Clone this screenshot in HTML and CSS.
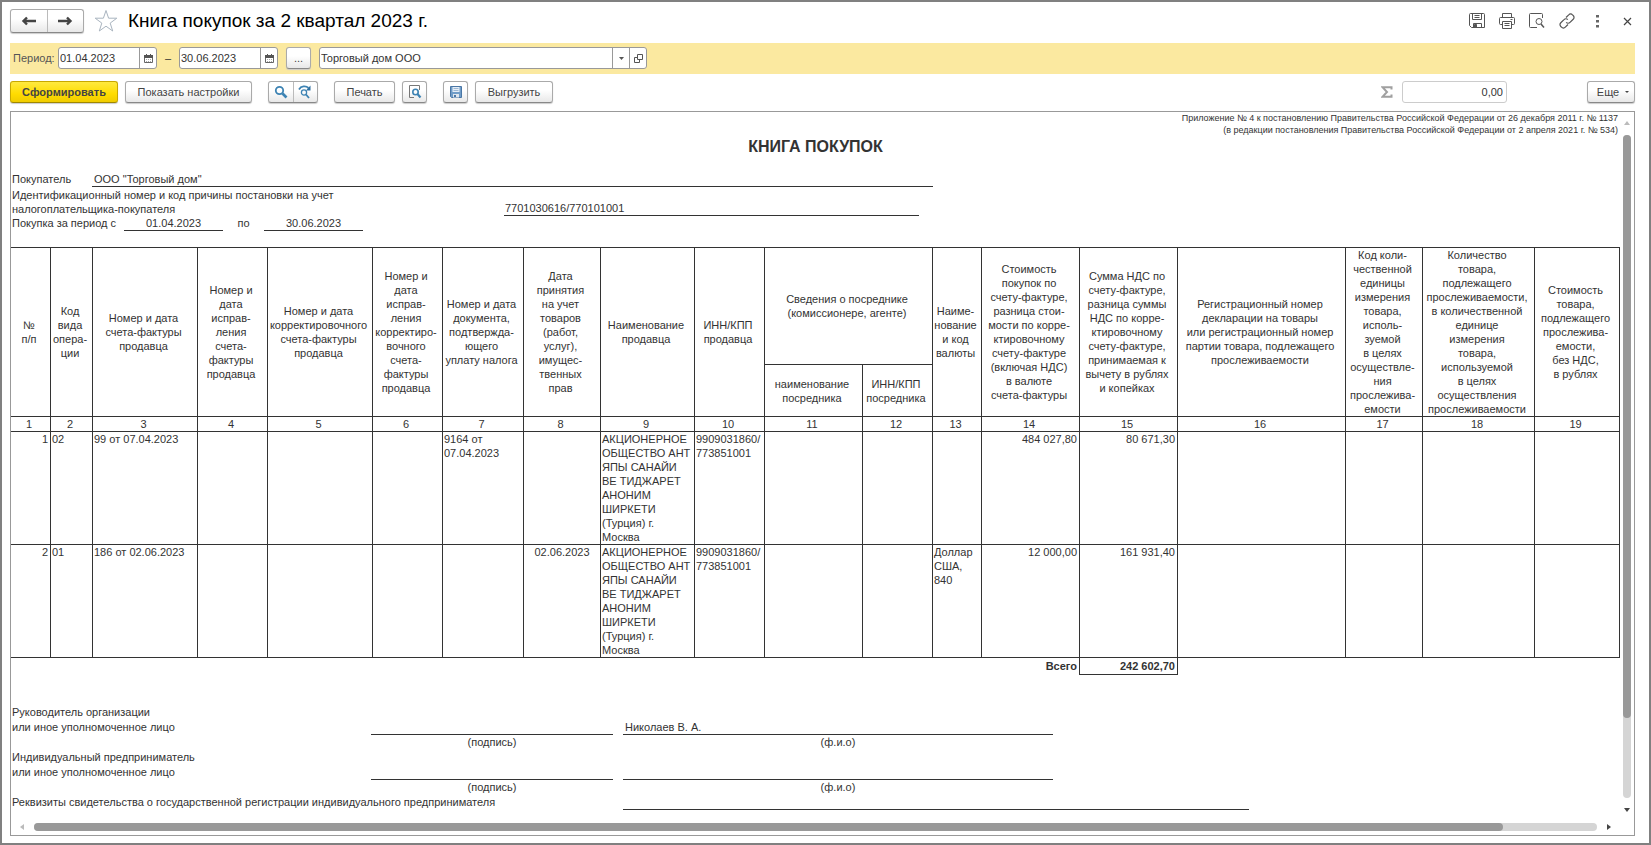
FILE: index.html
```html
<!DOCTYPE html>
<html lang="ru">
<head>
<meta charset="utf-8">
<title>Книга покупок за 2 квартал 2023 г.</title>
<link rel="stylesheet" href="styles.css">
</head>
<body>
<div class="window">
  <header class="titlebar">
    <div class="group nav">
      <button type="button" aria-label="Назад"><svg width="16" height="12" viewBox="0 0 16 12"><path d="M6 2.500L2.500 6 6 9.500M2 6h13" fill="none" stroke="#444" stroke-width="2.400"/></svg></button>
      <button type="button" aria-label="Вперед"><svg width="16" height="12" viewBox="0 0 16 12"><path d="M10 2.500L13.500 6 10 9.500M14 6H1" fill="none" stroke="#444" stroke-width="2.400"/></svg></button>
    </div>
    <button type="button" class="plain star" aria-label="В избранное"><svg width="24" height="24" viewBox="0 0 24 24"><path d="M12 1.500l2.600 7.700h8.200l-6.600 4.900 2.500 7.900-6.700-4.800-6.700 4.800 2.500-7.900-6.600-4.900h8.200z" fill="#fff" stroke="#a9b4bf"/></svg></button>
    <h1>Книга покупок за 2 квартал 2023 г.</h1>
    <div class="actions">
      <button type="button" class="plain" aria-label="Сохранить"><svg width="16" height="16" viewBox="0 0 16 16" fill="none" stroke="#555"><path d="M.5 1.500a1 1 0 0 1 1-1h13a1 1 0 0 1 1 1v13h-13l-2-2z"/><path d="M3.500.5v6h9v-6M5.500 2.500h5M5.500 4.500h5M4.500 14.500v-4h8v4"/><path d="M5.500 11.500h2v3h-2z" fill="#555"/></svg></button>
      <button type="button" class="plain" aria-label="Печать"><svg width="16" height="16" viewBox="0 0 16 16" fill="none" stroke="#555"><path d="M3.500 4.500v-4h9v4M3.500 11.500h-2a1 1 0 0 1-1-1v-5a1 1 0 0 1 1-1h13a1 1 0 0 1 1 1v5a1 1 0 0 1-1 1h-2"/><path d="M3.500 8.500h9v7h-9zM5.500 10.500h5M5.500 12.500h5M11.500 6.500h2"/></svg></button>
      <button type="button" class="plain" aria-label="Предварительный просмотр"><svg width="16" height="16" viewBox="0 0 16 16" fill="none" stroke="#555"><path d="M13.500 5V1.500a1 1 0 0 0-1-1h-11a1 1 0 0 0-1 1v12a1 1 0 0 0 1 1H8"/><circle cx="10" cy="8.500" r="3"/><path d="M12 11l3 3.500" stroke-width="1.500"/></svg></button>
      <button type="button" class="plain" aria-label="Получить ссылку"><svg width="16" height="16" viewBox="0 0 16 16" fill="none" stroke="#555" stroke-width="1.200"><path d="M7 4.500l2.700-2.700a2.600 2.600 0 0 1 3.800 0l.7.700a2.600 2.600 0 0 1 0 3.800L11 9.400a2.600 2.600 0 0 1-3.800 0M9 11.500l-2.700 2.700a2.600 2.600 0 0 1-3.800 0l-.7-.7a2.600 2.600 0 0 1 0-3.800L5 6.600a2.600 2.600 0 0 1 3.800 0"/></svg></button>
      <button type="button" class="plain" aria-label="Дополнительно"><svg width="16" height="16" viewBox="0 0 16 16" fill="#666"><path d="M7 2h3v2.500H7zM7 7h3v2.500H7zM7 12h3v2.500H7z"/></svg></button>
      <button type="button" class="plain" aria-label="Закрыть"><svg width="16" height="16" viewBox="0 0 16 16"><path d="M5 5l7 7M12 5l-7 7" stroke="#444" stroke-width="1.200"/></svg></button>
    </div>
  </header>

  <form class="period">
    <label for="from">Период:</label>
    <div class="field date">
      <input id="from" type="text" value="01.04.2023">
      <button type="button" aria-label="Выбрать начало"><svg width="9" height="9" viewBox="0 0 9 9"><path d="M.5 1.500h8v7h-8z" fill="#fff" stroke="#666"/><path d="M0 1h9v3H0zM2 0h1v2H2zM6 0h1v2H6z" fill="#555"/><path d="M2 5.500h5M2 7.500h5" stroke="#aaa" stroke-dasharray="1 1"/></svg></button>
    </div>
    <span class="dash">–</span>
    <div class="field date">
      <input type="text" value="30.06.2023" aria-label="Конец периода">
      <button type="button" aria-label="Выбрать конец"><svg width="9" height="9" viewBox="0 0 9 9"><path d="M.5 1.500h8v7h-8z" fill="#fff" stroke="#666"/><path d="M0 1h9v3H0zM2 0h1v2H2zM6 0h1v2H6z" fill="#555"/><path d="M2 5.500h5M2 7.500h5" stroke="#aaa" stroke-dasharray="1 1"/></svg></button>
    </div>
    <button type="button" class="btn square more">...</button>
    <div class="field company">
      <select aria-label="Организация"><option>Торговый дом ООО</option></select>
      <span class="arrow"><svg width="5" height="3" viewBox="0 0 5 3"><path d="M0 0h5L2.500 3z" fill="#555"/></svg></span>
      <button type="button" aria-label="Открыть"><svg width="9" height="9" viewBox="0 0 9 9" fill="none" stroke="#555"><path d="M3.500.5h5v5h-5zM3.500 3.500h-3v5h5v-3"/></svg></button>
    </div>
  </form>

  <div class="toolbar">
    <button type="button" class="btn primary">Сформировать</button>
    <button type="button" class="btn settings">Показать настройки</button>
    <div class="group find">
      <button type="button" aria-label="Найти"><svg width="14" height="14" viewBox="0 0 14 14" fill="none" stroke="#3d83b3"><circle cx="5.500" cy="5.500" r="3.700" stroke-width="1.800"/><path d="M8.500 8.500l4 4" stroke-width="2.600"/></svg></button>
      <button type="button" aria-label="Найти далее"><svg width="14" height="14" viewBox="0 0 14 14" fill="none" stroke="#3d83b3"><path d="M1 4.500C3 .8 8 .5 10.500 3" stroke-width="1.800"/><path d="M12.500.5v5H8z" fill="#2f6f9f" stroke="none"/><circle cx="6" cy="7.500" r="2.600" stroke-width="1.300"/><path d="M8 9.500l3 3.500" stroke-width="1.800"/></svg></button>
    </div>
    <button type="button" class="btn print">Печать</button>
    <button type="button" class="btn square" aria-label="Просмотр"><svg width="14" height="14" viewBox="0 0 14 14" fill="none"><path d="M11.500 5V.5h-10v12H6" stroke="#777"/><circle cx="7.500" cy="7" r="2.700" stroke="#3d83b3" stroke-width="1.600"/><path d="M9.500 9l3 3.500" stroke="#3d83b3" stroke-width="2.200"/></svg></button>
    <button type="button" class="btn square save" aria-label="Сохранить отчет"><svg width="12" height="12" viewBox="0 0 12 12"><path d="M.5.5h11v11h-10l-1-1z" fill="#6f9cc8" stroke="#4a76a5"/><path d="M2.500 1h7v5h-7z" fill="#e6eef7"/><path d="M3.500 2.500h5M3.500 4.500h5" stroke="#9db8d4"/><path d="M3 8h6v3.500H3z" fill="#dfe6ee"/><path d="M4 9h2v2H4z" fill="#4a76a5"/></svg></button>
    <button type="button" class="btn export">Выгрузить</button>
    <svg class="sigma" width="12" height="12" viewBox="0 0 12 12"><path d="M10.500 3.500V1.200h-9L6 6l-4.500 4.800h9V8.500" fill="none" stroke="#a0a0a0" stroke-width="2"/></svg>
    <input class="sum" type="text" value="0,00" aria-label="Сумма">
    <button type="button" class="btn menu">Еще <svg width="4" height="2" viewBox="0 0 4 2"><path d="M0 0h4L2 2z" fill="#444"/></svg></button>
  </div>

  <main class="report">
    <div class="sheet">
      <p class="annex">Приложение № 4 к постановлению Правительства Российской Федерации от 26 декабря 2011 г. № 1137<br>(в редакции постановления Правительства Российской Федерации от 2 апреля 2021 г. № 534)</p>
      <h2>КНИГА ПОКУПОК</h2>

      <div class="line"><span class="buyer-label">Покупатель</span><span class="value buyer">ООО "Торговый дом"</span></div>
      <div class="taxpayer">
        <span>Идентификационный номер и код причины постановки на учет<br>налогоплательщика-покупателя</span>
        <span class="value inn">7701030616/770101001</span>
      </div>
      <div class="line"><span class="range-label">Покупка за период с</span><span class="value day">01.04.2023</span><span class="to">по</span><span class="value day">30.06.2023</span></div>

      <table class="ledger">
        <colgroup><col class="w40"><col class="w42"><col class="w105"><col class="w70"><col class="w105"><col class="w70"><col class="w81"><col class="w77"><col class="w94"><col class="w70"><col class="w98"><col class="w70"><col class="w49"><col class="w98"><col class="w98"><col class="w168"><col class="w77"><col class="w112"><col class="w85"></colgroup>
        <thead>
          <tr class="upper">
            <th rowspan="2">№<br>п/п</th>
            <th rowspan="2">Код<br>вида<br>опера-<br>ции</th>
            <th rowspan="2">Номер и дата<br>счета-фактуры<br>продавца</th>
            <th rowspan="2">Номер и<br>дата<br>исправ-<br>ления<br>счета-<br>фактуры<br>продавца</th>
            <th rowspan="2">Номер и дата<br>корректировочного<br>счета-фактуры<br>продавца</th>
            <th rowspan="2">Номер и<br>дата<br>исправ-<br>ления<br>корректиро-<br>вочного<br>счета-<br>фактуры<br>продавца</th>
            <th rowspan="2">Номер и дата<br>документа,<br>подтвержда-<br>ющего<br>уплату налога</th>
            <th rowspan="2">Дата<br>принятия<br>на учет<br>товаров<br>(работ,<br>услуг),<br>имущес-<br>твенных<br>прав</th>
            <th rowspan="2">Наименование<br>продавца</th>
            <th rowspan="2">ИНН/КПП<br>продавца</th>
            <th colspan="2">Сведения о посреднике<br>(комиссионере, агенте)</th>
            <th rowspan="2">Наиме-<br>нование<br>и код<br>валюты</th>
            <th rowspan="2">Стоимость<br>покупок по<br>счету-фактуре,<br>разница стои-<br>мости по корре-<br>ктировочному<br>счету-фактуре<br>(включая НДС)<br>в валюте<br>счета-фактуры</th>
            <th rowspan="2">Сумма НДС по<br>счету-фактуре,<br>разница суммы<br>НДС по корре-<br>ктировочному<br>счету-фактуре,<br>принимаемая к<br>вычету в рублях<br>и копейках</th>
            <th rowspan="2">Регистрационный номер<br>декларации на товары<br>или регистрационный номер<br>партии товара, подлежащего<br>прослеживаемости</th>
            <th rowspan="2">Код коли-<br>чественной<br>единицы<br>измерения<br>товара,<br>исполь-<br>зуемой<br>в целях<br>осуществле-<br>ния<br>прослежива-<br>емости</th>
            <th rowspan="2">Количество<br>товара,<br>подлежащего<br>прослеживаемости,<br>в количественной<br>единице<br>измерения<br>товара,<br>используемой<br>в целях<br>осуществления<br>прослеживаемости</th>
            <th rowspan="2">Стоимость<br>товара,<br>подлежащего<br>прослежива-<br>емости,<br>без НДС,<br>в рублях</th>
          </tr>
          <tr class="lower"><th>наименование<br>посредника</th><th>ИНН/КПП<br>посредника</th></tr>
          <tr class="numbers"><th>1</th><th>2</th><th>3</th><th>4</th><th>5</th><th>6</th><th>7</th><th>8</th><th>9</th><th>10</th><th>11</th><th>12</th><th>13</th><th>14</th><th>15</th><th>16</th><th>17</th><th>18</th><th>19</th></tr>
        </thead>
        <tbody>
          <tr><td class="num">1</td><td>02</td><td>99 от 07.04.2023</td><td></td><td></td><td></td><td>9164 от<br>07.04.2023</td><td></td><td>АКЦИОНЕРНОЕ<br>ОБЩЕСТВО АНТ<br>ЯПЫ САНАЙИ<br>ВЕ ТИДЖАРЕТ<br>АНОНИМ<br>ШИРКЕТИ<br>(Турция) г.<br>Москва</td><td>9909031860/<br>773851001</td><td></td><td></td><td></td><td class="num">484 027,80</td><td class="num">80 671,30</td><td></td><td></td><td></td><td></td></tr>
          <tr><td class="num">2</td><td>01</td><td>186 от 02.06.2023</td><td></td><td></td><td></td><td></td><td class="mid">02.06.2023</td><td>АКЦИОНЕРНОЕ<br>ОБЩЕСТВО АНТ<br>ЯПЫ САНАЙИ<br>ВЕ ТИДЖАРЕТ<br>АНОНИМ<br>ШИРКЕТИ<br>(Турция) г.<br>Москва</td><td>9909031860/<br>773851001</td><td></td><td></td><td>Доллар<br>США,<br>840</td><td class="num">12 000,00</td><td class="num">161 931,40</td><td></td><td></td><td></td><td></td></tr>
        </tbody>
        <tfoot>
          <tr><td colspan="14" class="num caption">Всего</td><td class="num total">242 602,70</td><td colspan="4" class="caption"></td></tr>
        </tfoot>
      </table>

      <div class="signatures">
        <span class="wide">Руководитель организации</span>
        <span>или иное уполномоченное лицо</span><span class="value"></span><span class="value name">Николаев В. А.</span>
        <span class="hint sign">(подпись)</span><span class="hint person">(ф.и.о)</span>
        <span class="wide">Индивидуальный предприниматель</span>
        <span>или иное уполномоченное лицо</span><span class="value"></span><span class="value name"></span>
        <span class="hint sign">(подпись)</span><span class="hint person">(ф.и.о)</span>
        <span class="requisites">Реквизиты свидетельства о государственной регистрации индивидуального предпринимателя</span><span class="value certificate"></span>
      </div>
    </div>
    <div class="vbar">
      <svg width="6" height="4" viewBox="0 0 6 4"><path d="M0 4h6L3 0z" fill="#bbb"/></svg>
      <div class="track"><div class="thumb"></div></div>
      <svg width="6" height="4" viewBox="0 0 6 4"><path d="M0 0h6L3 4z" fill="#444"/></svg>
    </div>
    <div class="hbar">
      <svg width="4" height="6" viewBox="0 0 4 6"><path d="M4 0v6L0 3z" fill="#bbb"/></svg>
      <div class="track"><div class="thumb"></div></div>
      <svg width="4" height="6" viewBox="0 0 4 6"><path d="M0 0v6l4-3z" fill="#444"/></svg>
    </div>
  </main>
</div>
</body>
</html>
```
FILE: styles.css
```css
* { box-sizing: border-box; }

body {
  margin: 0;
  font-family: "Liberation Sans", Arial, sans-serif;
  font-size: 11px;
  line-height: 14px;
  color: #333;
}

button, input, select {
  font: inherit;
  color: inherit;
  margin: 0;
}

svg { display: block; flex: none; }

.window {
  display: flex;
  flex-direction: column;
  height: 100vh;
  min-height: 400px;
  padding: 7px 14px 7px 8px;
  border: 2px solid #808080;
  background: #fff;
}

/* Title bar */
.titlebar {
  display: flex;
  align-items: center;
  height: 24px;
  flex: none;
}

.titlebar h1 {
  margin: 0 0 0 10px;
  font-size: 19px;
  line-height: 24px;
  font-weight: normal;
  color: #000;
}

.group {
  display: flex;
  border: 1px solid #aaa;
  border-bottom-color: #888;
  border-radius: 3px;
  background: linear-gradient(#fff 40%, #e8e8e8);
  box-shadow: 0 1px 1px #ccc;
}

.group button {
  display: flex;
  flex: 1;
  align-items: center;
  justify-content: center;
  padding: 0;
  border: 0;
  background: none;
}

.group button + button { border-left: 1px solid #bbb; }

.nav { width: 74px; height: 24px; }

.plain {
  padding: 0;
  border: 0;
  background: none;
}

.star { margin-left: 10px; }

.actions {
  display: flex;
  gap: 14px;
  margin-left: auto;
}

/* Period band */
.period {
  display: flex;
  align-items: flex-start;
  flex: none;
  height: 31px;
  margin-top: 10px;
  padding: 4px 0 0 3px;
  background: #fbe9a0;
}

.period label, .dash { line-height: 22px; }
.period label { width: 45px; color: #555; }

.field {
  display: flex;
  position: relative;
  height: 22px;
  border: 1px solid #999;
  border-radius: 3px;
  background: #fff;
}

.field input, .field select {
  flex: 1;
  min-width: 0;
  padding: 0 1px;
  border: 0;
  background: none;
  appearance: none;
}

.field button {
  display: flex;
  align-items: center;
  justify-content: center;
  width: 17px;
  padding: 0;
  border: 0;
  border-left: 1px solid #999;
  background: none;
}

.date { width: 99px; }
.dash { width: 22px; text-align: center; }
.company { width: 328px; }
.company select { padding: 0 20px 0 1px; }

.arrow {
  position: absolute;
  top: 0;
  right: 16px;
  display: flex;
  align-items: center;
  justify-content: center;
  width: 18px;
  height: 100%;
  border-left: 1px solid #999;
  pointer-events: none;
}

.btn {
  display: flex;
  align-items: center;
  justify-content: center;
  height: 22px;
  padding: 0;
  border: 1px solid #aaa;
  border-bottom-color: #888;
  border-radius: 3px;
  background: linear-gradient(#fff 40%, #e8e8e8);
  box-shadow: 0 1px 1px #ccc;
  color: #444;
}

.square { width: 25px; }
.more { margin: 0 8px; }

/* Command bar */
.toolbar {
  display: flex;
  align-items: center;
  flex: none;
  height: 22px;
  margin-top: 7px;
}

.primary {
  width: 108px;
  border-color: #c8a800;
  border-bottom-color: #a08800;
  background: linear-gradient(#ffe940, #ffdc00 60%, #f0cc00);
  font-weight: bold;
}

.settings { width: 127px; margin-left: 7px; }
.find { width: 50px; height: 22px; margin-left: 16px; }
.print { width: 61px; margin: 0 7px 0 16px; }
.save { margin: 0 7px 0 16px; }
.export { width: 78px; }
.sigma { margin-left: auto; }

.sum {
  width: 105px;
  height: 22px;
  margin: 0 80px 0 9px;
  padding: 0 3px;
  border: 1px solid #ccc;
  border-radius: 3px;
  text-align: right;
}

.menu { width: 48px; gap: 6px; padding-left: 4px; }

/* Report area with its scroll bars */
.report {
  display: grid;
  grid-template-columns: minmax(0, 1fr) 14px;
  grid-template-rows: minmax(0, 1fr) 16px;
  flex: 1;
  min-height: 0;
  margin-top: 8px;
  border: 1px solid #999;
}

.sheet { overflow: hidden; white-space: nowrap; }

.annex {
  margin: 0;
  padding-right: 2px;
  font-size: 9px;
  line-height: 12px;
  text-align: right;
}

.sheet h2 {
  margin: 1px 0 15px;
  font-size: 16px;
  line-height: 20px;
  text-align: center;
}

.line { display: flex; height: 15px; padding-left: 1px; }

.value { border-bottom: 1px solid #333; height: 15px; }

.buyer-label { width: 80px; }
.buyer { width: 841px; padding-left: 2px; }

.taxpayer {
  display: flex;
  align-items: flex-end;
  height: 29px;
  padding-left: 1px;
}

.taxpayer span:first-child { width: 492px; }
.taxpayer .inn { width: 415px; padding-left: 1px; }

.range-label { width: 112px; }
.day { width: 99px; text-align: center; }
.to { width: 41px; text-align: center; }

.ledger {
  width: calc(100% - 1px);
  margin-top: 16px;
  table-layout: fixed;
  border-collapse: separate;
  border-spacing: 0;
}

.w40 { width: 40px; }
.w42 { width: 42px; }
.w49 { width: 49px; }
.w70 { width: 70px; }
.w77 { width: 77px; }
.w81 { width: 81px; }
.w85 { width: 85px; }
.w94 { width: 94px; }
.w98 { width: 98px; }
.w105 { width: 105px; }
.w112 { width: 112px; }
.w168 { width: 168px; }

.ledger th, .ledger td {
  padding: 0 1px;
  border: solid #333;
  border-width: 0 1px 1px 0;
  font-weight: normal;
}

.ledger th { padding: 0 3px 0 0; }

.ledger .upper th { border-top-width: 1px; }
.ledger .upper { height: 118px; }
.ledger .lower { height: 52px; }

.ledger td { vertical-align: top; text-align: left; }
.ledger .num { text-align: right; padding-right: 2px; }
.ledger .mid { text-align: center; }

.ledger tfoot td { height: 17px; font-weight: bold; padding-top: 1px; }
.ledger tfoot .caption { border-width: 0 1px 0 0; }
.ledger tfoot .caption:last-child { border: 0; }

.signatures {
  display: grid;
  grid-template-columns: 359px 242px 430px 196px;
  grid-auto-rows: 15px;
  margin-top: 30px;
  padding-left: 1px;
}

.wide { grid-column: 1 / -1; }
.name, .person, .certificate { margin: 0 -10px 0 10px; }
.name { padding-left: 2px; }
.hint { text-align: center; }
.sign { grid-column: 2; }
.requisites { grid-column: span 2; }
.certificate { grid-column: 3 / -1; }

.track {
  flex: 1;
  border-radius: 4px;
  background: #d5d5d5;
}

.thumb { border-radius: 4px; background: #999; }

.vbar {
  display: flex;
  flex-direction: column;
  align-items: center;
  gap: 10px;
  padding: 9px 0 7px;
}

.vbar .track { width: 8px; }
.vbar .thumb { height: 88%; }

.hbar {
  display: flex;
  grid-column: 1 / -1;
  align-items: center;
  gap: 10px;
  padding: 0 23px 0 9px;
}

.hbar .track { height: 8px; }
.hbar .thumb { width: 94%; height: 8px; }
```
